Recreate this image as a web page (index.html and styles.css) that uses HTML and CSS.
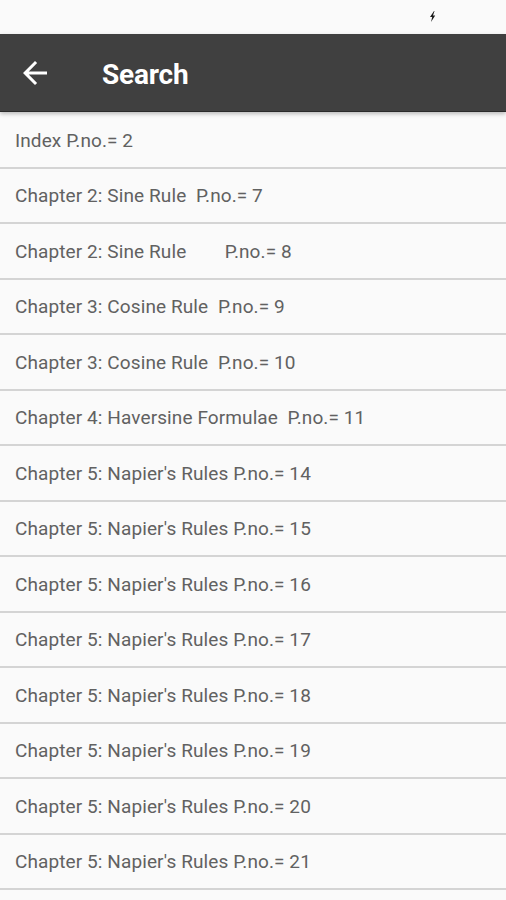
FILE: index.html
```html
<!DOCTYPE html>
<html>
<head>
<meta charset="utf-8">
<link rel="stylesheet" href="styles.css">
</head>
<body>
<div class="status">
  <svg class="bolt" width="7" height="11" viewBox="0 0 7 11"><path d="M5 0 L1 6 L3.2 6 L2 11 L6.2 4.5 L4 4.5 L5.5 0 Z" fill="#1a1a1a"/></svg>
</div>
<header class="toolbar">
  <svg class="back" width="36" height="36" viewBox="0 0 24 24"><path d="M20 11H7.83l5.59-5.59L12 4l-8 8 8 8 1.41-1.41L7.83 13H20v-2z" fill="#fff"/></svg>
  <h1 class="title">Search</h1>
</header>
<ul class="list">
  <li class="row">Index P.no.= 2</li>
  <li class="row">Chapter 2: Sine Rule  P.no.= 7</li>
  <li class="row">Chapter 2: Sine Rule        P.no.= 8</li>
  <li class="row">Chapter 3: Cosine Rule  P.no.= 9</li>
  <li class="row">Chapter 3: Cosine Rule  P.no.= 10</li>
  <li class="row">Chapter 4: Haversine Formulae  P.no.= 11</li>
  <li class="row">Chapter 5: Napier's Rules P.no.= 14</li>
  <li class="row">Chapter 5: Napier's Rules P.no.= 15</li>
  <li class="row">Chapter 5: Napier's Rules P.no.= 16</li>
  <li class="row">Chapter 5: Napier's Rules P.no.= 17</li>
  <li class="row">Chapter 5: Napier's Rules P.no.= 18</li>
  <li class="row">Chapter 5: Napier's Rules P.no.= 19</li>
  <li class="row">Chapter 5: Napier's Rules P.no.= 20</li>
  <li class="row">Chapter 5: Napier's Rules P.no.= 21</li>
</ul>
</body>
</html>
```
FILE: styles.css
```css
html, body {
  margin: 0;
  padding: 0;
  background: #fafafa;
  font-family: Roboto, "Liberation Sans", sans-serif;
  overflow: hidden;
}
.status {
  height: 34px;
  background: #fafafa;
  display: flex;
  align-items: center;
  padding-left: 429px;
}
.bolt { display: block; margin-top: -2px; }
.toolbar {
  height: 77px;
  background: #404040;
  border-bottom: 1px solid #2a2a2a;
  display: flex;
  align-items: center;
  box-shadow: 0 2px 4px rgba(0,0,0,0.25);
  position: relative;
}
.back { margin-left: 17px; display: block; }
.title {
  margin: 0 0 0 49px;
  padding-top: 3px;
  color: #fff;
  font-size: 28px;
  font-weight: 700;
  letter-spacing: -0.2px;
}
.list {
  list-style: none;
  margin: 0;
  padding: 1px 0 0;
}
.row {
  box-sizing: border-box;
  height: 55.5px;
  border-bottom: 2px solid #d4d4d4;
  display: flex;
  align-items: center;
  padding-left: 15px;
  padding-top: 1px;
  font-size: 19px;
  letter-spacing: 0.1px;
  color: #616161;
  white-space: pre;
}
```
